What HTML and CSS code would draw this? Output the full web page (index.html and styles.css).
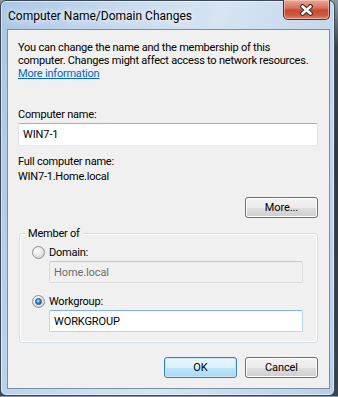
FILE: index.html
```html
<!DOCTYPE html>
<html lang="en">

<head>
    <meta charset="UTF-8">
    <meta name="viewport" content="width=device-width, initial-scale=1.0">
    <title>Computer Name/Domain Changes</title>
    <link rel="stylesheet" href="styles.css">
</head>

<body>

    <div class="window">
        <div class="titlebar">
            <span class="title">Computer Name/Domain Changes</span>
            <button class="close-btn" aria-label="Close">
                <svg width="15" height="12" viewBox="0 0 15 12">
                    <path d="M3.5 2.5 L11.5 9.5 M11.5 2.5 L3.5 9.5" stroke="#3a3030" stroke-width="4.8" stroke-linecap="round" fill="none"/>
                    <path d="M3.5 2.5 L11.5 9.5 M11.5 2.5 L3.5 9.5" stroke="#ffffff" stroke-width="2.6" stroke-linecap="round" fill="none"/>
                </svg>
            </button>
        </div>

        <div class="client">
            <p class="intro">
                You can change the name and the membership of this<br>
                computer. Changes might affect access to network resources.<br>
                <a href="#">More information</a>
            </p>

            <div class="label name-label">Computer name:</div>
            <input type="text" class="textbox name-input" value="WIN7-1">

            <div class="label full-label">Full computer name:</div>
            <div class="label full-value">WIN7-1.Home.local</div>

            <div class="more-row">
                <button class="btn">More...</button>
            </div>

            <div class="group">
                <div class="group-title">Member of</div>

                <label class="radio-row first">
                    <span class="radio"></span>
                    <span>Domain:</span>
                </label>
                <input type="text" class="textbox group-input" value="Home.local" disabled>

                <label class="radio-row">
                    <span class="radio checked"></span>
                    <span>Workgroup:</span>
                </label>
                <input type="text" class="textbox group-input focused" value="WORKGROUP">
            </div>

            <div class="actions">
                <button class="btn default">OK</button>
                <button class="btn">Cancel</button>
            </div>
        </div>
    </div>

</body>

</html>
```

FILE: styles.css
```css
body {
    margin: 0;
    background: linear-gradient(180deg, #8c98a4 0%, #3a444d 12%, #2f3942 40%, #3a434c 100%);
    font-family: "Segoe UI", Roboto, "Liberation Sans", sans-serif;
    font-size: 11px;
    letter-spacing: -0.22px;
    color: #000;
}

.window {
    width: 335px;
    height: 396px;
    box-sizing: border-box;
    border: 1px solid #3b4756;
    border-radius: 6px;
    padding: 0 4px 6px 6px;
    display: flex;
    flex-direction: column;
    background: linear-gradient(100deg, #aac6e6 0%, #c6daee 30%, #d6e4f3 55%, #b9cfe8 100%);
    box-shadow: inset 0 0 0 1px rgba(255, 255, 255, 0.55);
}

.titlebar {
    height: 28px;
    flex-shrink: 0;
    display: flex;
    justify-content: space-between;
    align-items: flex-start;
}

.title {
    padding: 9px 0 0 1px;
    font-size: 12px;
    line-height: 13px;
    letter-spacing: 0;
    text-shadow: 0 0 6px #fff, 0 0 10px rgba(255, 255, 255, 0.9);
}

.close-btn {
    width: 47px;
    height: 20px;
    margin-top: -1px;
    padding: 0;
    border: 1px solid #5a2a22;
    border-top: none;
    border-radius: 0 0 5px 5px;
    background: linear-gradient(180deg, #e9a898 0%, #d9735e 40%, #c74a30 55%, #cf5a3f 80%, #e3866d 100%);
    box-shadow: inset 0 0 0 1px rgba(255, 220, 210, 0.5);
    display: flex;
    justify-content: center;
    align-items: center;
}

.client {
    flex: 1;
    min-height: 0;
    background: #f0f0f0;
    border: 1px solid #7c8ea4;
    padding: 11px 10px 0 10px;
    display: flex;
    flex-direction: column;
}

.intro {
    margin: 0;
    line-height: 13px;
    white-space: nowrap;
}

.intro a {
    color: #0066cc;
}

.label {
    line-height: 13px;
}

.name-label {
    margin-top: 28px;
}

.textbox {
    box-sizing: border-box;
    font-family: inherit;
    font-size: 11px;
    letter-spacing: -0.1px;
    color: #000;
    background: #fff;
    border: 1px solid;
    border-color: #abadb3 #e2e3ea #e3e9ef #e2e3ea;
    border-radius: 2px;
    padding: 0 4px;
    outline: none;
}

.name-input {
    margin-top: 2px;
    height: 23px;
    width: 300px;
}

.full-label {
    margin-top: 9px;
}

.full-value {
    margin-top: 2px;
}

.more-row {
    margin-top: 14px;
    display: flex;
    justify-content: flex-end;
}

.btn {
    width: 73px;
    height: 21px;
    padding: 0;
    font-family: inherit;
    font-size: 11px;
    letter-spacing: -0.1px;
    color: #000;
    border: 1px solid #707070;
    border-radius: 3px;
    background: linear-gradient(180deg, #f2f2f2 0%, #ebebeb 50%, #dddddd 51%, #cfcfcf 100%);
    box-shadow: inset 0 0 0 1px #fcfcfc;
}

.more-row .btn {
    margin-right: 1px;
}

.btn.default {
    border-color: #3c7fb1;
    background: linear-gradient(180deg, #eaf6fd 0%, #d9f0fc 50%, #bee6fd 51%, #a7d9f5 100%);
    box-shadow: inset 0 0 0 1px #c6e6f8;
}

.group {
    margin: 15px 1px 0 1px;
    padding: 0 14px 10px 29px;
    border: 1px solid #d5dfe5;
    border-radius: 3px;
    box-shadow: inset 0 0 0 1px #fff;
    display: flex;
    flex-direction: column;
}

.group-title {
    align-self: flex-start;
    margin: -7px 0 0 -23px;
    padding: 0 2px;
    line-height: 13px;
    background: #f0f0f0;
}

.radio-row {
    display: flex;
    align-items: center;
    gap: 4px;
    line-height: 13px;
    margin-left: -17px;
    margin-top: 12px;
}

.radio-row.first {
    margin-top: 6px;
}

.radio {
    width: 11px;
    height: 11px;
    border: 1px solid #8e8f8f;
    border-radius: 50%;
    background: radial-gradient(circle at 40% 35%, #ffffff 0%, #e6e6e6 50%, #c8c8c8 100%);
    display: flex;
    justify-content: center;
    align-items: center;
}

.radio.checked::after {
    content: "";
    width: 5px;
    height: 5px;
    border-radius: 50%;
    border: 1px solid #1b4f80;
    background: radial-gradient(circle at 40% 35%, #9fdcff 0%, #3b8fd6 50%, #0d4f8f 100%);
}

.group-input {
    margin-top: 2px;
    height: 22px;
}

.group-input:disabled {
    background: #f0f0f0;
    color: #6d6d6d;
    border-color: #c7c7c7 #dddddd #dddddd #dddddd;
}

.group-input.focused {
    border-color: #7eb4ea #b7d9ed #b7d9ed #b7d9ed;
}

.actions {
    margin-top: 14px;
    display: flex;
    justify-content: flex-end;
    gap: 8px;
    padding-right: 1px;
}
```
